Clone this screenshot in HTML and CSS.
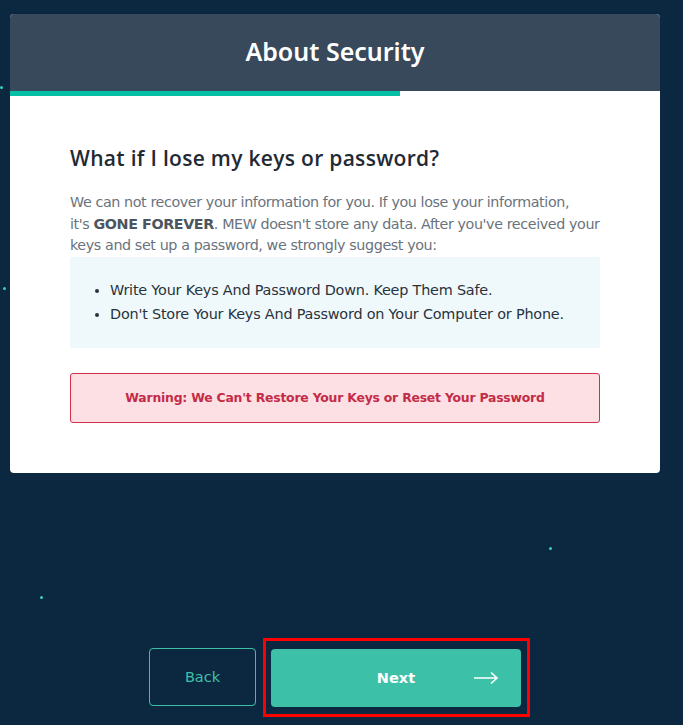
FILE: index.html
```html
<!DOCTYPE html>
<html>
<head>
<meta charset="utf-8">
<link rel="stylesheet" href="styles.css">
</head>
<body>
<div class="page">
  <span class="star s1"></span>
  <span class="star s2"></span>
  <span class="star s3"></span>
  <span class="star s4"></span>
  <div class="card">
    <div class="card-header"><h1>About Security</h1></div>
    <div class="progress"><div class="progress-fill"></div></div>
    <div class="card-body">
      <h2>What if I lose my keys or password?</h2>
      <p class="intro">We can not recover your information for you. If you lose your information,<br>it's <b>GONE FOREVER</b>. MEW doesn't store any data. After you've received your keys and set up a password, we strongly suggest you:</p>
      <div class="tips">
        <ul>
          <li>Write Your Keys And Password Down. Keep Them Safe.</li>
          <li>Don't Store Your Keys And Password on Your Computer or Phone.</li>
        </ul>
      </div>
      <div class="warning">Warning: We Can't Restore Your Keys or Reset Your Password</div>
    </div>
  </div>
  <div class="actions">
    <button class="btn-back">Back</button>
    <div class="focus-ring">
      <button class="btn-next"><span>Next</span>
        <svg class="arrow" width="26" height="14" viewBox="0 0 26 14"><path d="M1 7H24M18 1.5L24 7L18 12.5" fill="none" stroke="#fff" stroke-width="1.6"/></svg>
      </button>
    </div>
  </div>
</div>
</body>
</html>
```
FILE: styles.css
```css
html, body { margin: 0; padding: 0; }
body { background: #0c2840; font-family: "DejaVu Sans", "Noto Sans", sans-serif; }
.page { position: relative; width: 683px; height: 725px; overflow: hidden; padding-top: 14px; box-sizing: border-box; }
.star { position: absolute; width: 3px; height: 3px; border-radius: 50%; background: #3ad0b8; }
.s1 { left: 0; top: 86px; }
.s2 { left: 3px; top: 287px; }
.s3 { left: 549px; top: 547px; }
.s4 { left: 40px; top: 596px; }
.card { margin-left: 10px; width: 650px; background: #fff; border-radius: 4px; overflow: hidden; }
.card-header { height: 77px; background: #37495a; display: flex; align-items: center; justify-content: center; }
.card-header h1 { margin: 0 0 4px; color: #fff; font-family: "Noto Sans", sans-serif; font-weight: 600; font-size: 25px; letter-spacing: 0; }
.progress { height: 5px; background: #fff; }
.progress-fill { width: 390px; height: 5px; background: #05c0a5; }
.card-body { padding: 50px 60px 50px 60px; }
.card-body h2 { margin: 0 0 22px; font-size: 21px; line-height: 24px; font-weight: 600; color: #1f2a35; font-family: "Open Sans", sans-serif; letter-spacing: 0.3px; }
.intro { margin: 0; font-size: 14.3px; line-height: 21.5px; color: #6a737d; letter-spacing: -0.4px; }
.intro b { color: #4c5560; font-weight: 700; }
.tips { background: #eff9fb; padding: 21px 0 22px 0; }
.tips ul { margin: 0; padding-left: 40px; }
.tips li { font-size: 14.4px; line-height: 24px; color: #2a323b; letter-spacing: -0.2px; }
.warning { margin-top: 25px; height: 48px; border: 1px solid #d0304a; border-radius: 3px; background: #fce0e4; color: #c42b47; font-weight: 700; font-size: 12.4px; display: flex; align-items: center; justify-content: center; letter-spacing: -0.2px; }
.actions { display: flex; justify-content: center; align-items: center; margin-top: 165px; gap: 7px; padding-right: 4px; }
.btn-back { width: 107px; height: 58px; border: 1px solid #3cc1a8; border-radius: 4px; background: transparent; color: #3cc1a8; font-family: "DejaVu Sans", sans-serif; font-size: 14.5px; }
.focus-ring { border: 3px solid #ff0000; padding: 8px 6px 7px 5px; }
.btn-next { width: 250px; height: 58px; border: 0; border-radius: 4px; background: #3cc1a8; color: #fff; font-family: "DejaVu Sans", sans-serif; font-weight: 700; font-size: 14.5px; position: relative; display: flex; align-items: center; justify-content: center; }
.arrow { position: absolute; right: 22px; top: 22px; }
```
